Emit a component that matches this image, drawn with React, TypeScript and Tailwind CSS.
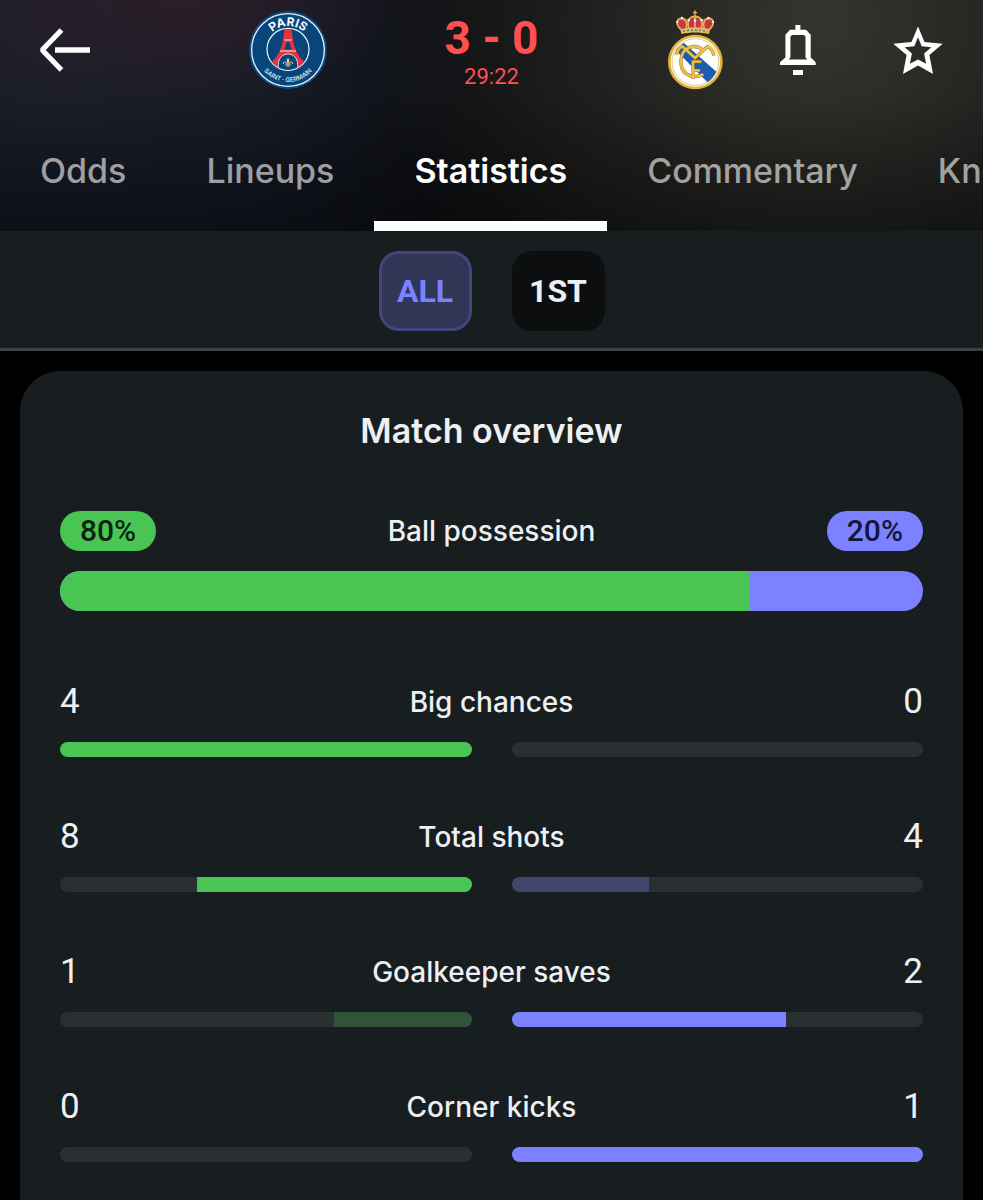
import { clsx } from 'clsx';

interface Stat {
    label: string;
    home: number;
    away: number;
}

const TABS = ['Odds', 'Lineups', 'Statistics', 'Commentary', 'Knockout'];

const STATS: Stat[] = [
    { label: 'Big chances', home: 4, away: 0 },
    { label: 'Total shots', home: 8, away: 4 },
    { label: 'Goalkeeper saves', home: 1, away: 2 },
    { label: 'Corner kicks', home: 0, away: 1 },
];

function BackIcon() {
    return (
        <svg viewBox="0 0 51 48" className="h-12 w-[51px]" fill="none" stroke="currentColor">
            <path d="M21.5 4 2.2 24 21.5 44" strokeWidth="5.2" strokeLinejoin="bevel" />
            <path d="M15 24h35" strokeWidth="5.5" />
        </svg>
    );
}

function BellIcon() {
    return (
        <svg viewBox="0 0 48 52" className="h-[52px] w-12" fill="currentColor">
            <path d="M21.4 1h5v5h-5z" />
            <path
                fillRule="evenodd"
                d="M16 5.7h16l4.7 5v22.800l5 4.800V41H6v-2.700l5.400-4.800V10.700ZM18 11l-1.600 1.700v20.800L14.600 35.500h18.800l-1.900-2V12.700L30 11Z"
            />
            <path d="M19 46h10v5H19z" />
        </svg>
    );
}

function StarIcon() {
    return (
        <svg viewBox="0 0 50 48" className="h-12 w-[50px]" fill="currentColor">
            <path
                fillRule="evenodd"
                d="m25 .5 6.500 15.500 18.200 1.700-13.300 11.300 3.600 18.900L25 39.500 10 47.900l3.600-18.900L.3 17.700l18.200-1.700ZM25 11.200l-3.700 9-9.600 1 7.200 6.300-2 10.200 8.100-4.200 8.100 4.200-2-10.200 7.200-6.300-9.600-1Z"
            />
        </svg>
    );
}

function ParisCrest() {
    return (
        <svg viewBox="30 30 240 240" className="size-20" role="img" aria-label="Paris Saint-Germain">
            <defs>
                <path id="psg-top" d="M78 150a72 72 0 0 1 144 0" />
                <path id="psg-bottom" d="M54 150a96 96 0 0 0 192 0" />
                <clipPath id="psg-inner">
                    <circle cx="150" cy="148" r="61" />
                </clipPath>
            </defs>
            <circle cx="150" cy="150" r="117" fill="#0b4a82" />
            <circle cx="150" cy="150" r="109" fill="#07457b" stroke="#e6f0f6" strokeWidth="4" />
            <circle cx="150" cy="148" r="63" fill="#07457b" stroke="#f3f8fb" strokeWidth="3.5" />
            <g clipPath="url(#psg-inner)">
                <path d="M140 84h20l5 36c6 32 18 54 42 74l-18 22h-78l-18-22c24-20 36-42 42-74Z" fill="#e9323c" />
                <path d="M139 120h22M126 153h48" stroke="#f6e9ed" strokeWidth="3" />
                <path d="M146 126h8l7 23h-22Z" fill="#07457b" />
                <path d="M121 212v-18c0-20 13-32 29-32s29 12 29 32v18Z" fill="#07457b" stroke="#f3f8fb" strokeWidth="2.5" />
                <path d="M150 174c-6 7-5 11-2 17h4c3-6 4-10-2-17Z" fill="#dfc596" />
                <path d="M146 193c-3-10-12-9-9-1M154 193c3-10 12-9 9-1M141 195h18M150 190v12" fill="none" stroke="#dfc596" strokeWidth="3" />
            </g>
            <text className="font-['Inter']" fontSize="36" fontWeight="700" fill="#f8fbfd">
                <textPath href="#psg-top" startOffset="50%" textAnchor="middle">PARIS</textPath>
            </text>
            <text className="font-['Inter']" fontSize="19" fontWeight="600" fill="#d3e3ee">
                <textPath href="#psg-bottom" startOffset="50%" textAnchor="middle">SAINT · GERMAIN</textPath>
            </text>
        </svg>
    );
}

function MadridCrest() {
    return (
        <svg viewBox="0 30 240 240" className="size-20" role="img" aria-label="Real Madrid">
            <defs>
                <clipPath id="rm-inner">
                    <circle cx="121" cy="188" r="70" />
                </clipPath>
            </defs>

            {/* crown */}
            <path d="M77 91c-16-14-16-29-3-36 11-4 20-1 25 6 4-9 13-14 21-14s17 5 21 14c5-7 14-10 25-6 13 7 13 22-3 36-30-7-56-7-86 0Z" fill="#c9364b" />
            <g fill="none" stroke="#dfb74f" strokeWidth="5">
                <path d="M78 89C59 70 66 55 80 55c16 2 18 18 13 32M163 89c19-19 12-34-2-34-16 2-18 18-13 32" />
                <path d="M102 86c-8-23 2-37 18-37s26 14 18 37M120 48v36" />
            </g>
            <g fill="#f7efcf">
                <circle cx="67" cy="66" r="3.5" />
                <circle cx="81" cy="54" r="4" />
                <circle cx="101" cy="60" r="4" />
                <circle cx="120" cy="62" r="4" />
                <circle cx="140" cy="60" r="4" />
                <circle cx="160" cy="54" r="4" />
                <circle cx="174" cy="66" r="3.5" />
            </g>
            <path d="M120 31v17M114 38h12" stroke="#dfb74f" strokeWidth="4" />
            <path d="M76 88c29-8 61-8 89 0l-3 14c-28-6-54-6-83 0Z" fill="#e4bd55" />
            <path d="M84 94c25-5 49-5 73 0" stroke="#4d7198" strokeWidth="4" strokeDasharray="6 6" fill="none" />

            {/* roundel */}
            <circle cx="121" cy="186" r="78" fill="#fff" stroke="#dfb13d" strokeWidth="8" />
            <g clipPath="url(#rm-inner)">
                <path d="m62 151 24-23 99 88-23 35Z" fill="#1d5bb0" />
            </g>
            <circle cx="121" cy="186" r="70" fill="none" stroke="#d9aa35" strokeWidth="2" />
            <g fill="none" strokeLinejoin="round">
                <g stroke="#9d7826" strokeWidth="10">
                    <path d="M64 164c4-15 11-22 18-25l38 35 38-35c10 6 16 14 19 28M145 151c-24-22-63-11-67 27-4 40 28 64 67 45" />
                    <path d="M139 185h-25v52M114 211h21" />
                </g>
                <g stroke="#ecc24c" strokeWidth="7">
                    <path d="M64 164c4-15 11-22 18-25l38 35 38-35c10 6 16 14 19 28M145 151c-24-22-63-11-67 27-4 40 28 64 67 45" />
                    <path d="M139 185h-25v52M114 211h21" />
                </g>
            </g>
        </svg>
    );
}

function MatchHeader() {
    return (
        <header className="overflow-hidden bg-[linear-gradient(to_bottom,transparent_40%,rgba(0,0,0,0.35)),radial-gradient(ellipse_220px_100px_at_180px_0px,#2b1e28,transparent),radial-gradient(ellipse_440px_440px_at_820px_20px,#35352f,transparent),radial-gradient(ellipse_420px_260px_at_60px_20px,#20202b,transparent),linear-gradient(to_right,#111622_25%,#0c0d0f_50%)]">
            <div className="grid grid-cols-[3fr_7fr_3fr] items-center px-10 pt-[10px] pb-5 text-white">
                <a href="#back" aria-label="Back" className="w-fit">
                    <BackIcon />
                </a>
                <div className="flex items-center justify-between">
                    <ParisCrest />
                    <div className="flex flex-col items-center font-['Roboto',sans-serif] text-[#ff4f50]">
                        <p className="text-[46px] leading-[54px] font-bold whitespace-nowrap">3 - 0</p>
                        <p className="text-[22px] leading-6">29:22</p>
                    </div>
                    <MadridCrest />
                </div>
                <div className="flex items-center justify-end gap-[71px]">
                    <button type="button" aria-label="Notifications">
                        <BellIcon />
                    </button>
                    <button type="button" aria-label="Favourite">
                        <StarIcon />
                    </button>
                </div>
            </div>
            <nav className="flex">
                {TABS.map((tab) => (
                    <a
                        key={tab}
                        href={`#${tab.toLowerCase()}`}
                        className={clsx(
                            'flex h-[121px] shrink-0 items-center border-b-10 px-10 pt-[10px] text-[34px]',
                            tab === 'Statistics'
                                ? 'border-white font-semibold text-white'
                                : 'border-transparent font-medium text-white/60'
                        )}
                    >
                        {tab}
                    </a>
                ))}
            </nav>
        </header>
    );
}

function PeriodFilter() {
    return (
        <div className="flex justify-center gap-10 border-b-3 border-[#3d4144] bg-[#181d1f] pt-5 pb-[17px] font-['Roboto',sans-serif] text-[32px] font-bold">
            <button type="button" aria-pressed="true" className="h-20 min-w-[93px] rounded-[20px] border-3 border-[#42467d] bg-[#303655] text-[#7c82ff]">
                ALL
            </button>
            <button type="button" aria-pressed="false" className="h-20 min-w-[93px] rounded-[20px] bg-[#0c0e10] text-[#edf0f3]">
                1ST
            </button>
        </div>
    );
}

function StatRow({ label, home, away }: Stat) {
    const total = home + away;

    return (
        <div>
            <div className="grid grid-cols-[1fr_auto_1fr] items-center leading-10">
                <span className="font-['Roboto',sans-serif] text-[35px]">{home}</span>
                <span className="text-[28px] font-medium">{label}</span>
                <span className="text-right font-['Roboto',sans-serif] text-[35px]">{away}</span>
            </div>
            <div className="mt-5 grid grid-cols-2 gap-10">
                <div className="flex h-[15px] justify-end overflow-hidden rounded-full bg-[#2a2f32]">
                    <div
                        className={home < away ? 'bg-[#30543a]' : 'bg-[#49c553]'}
                        style={{ width: `${(home / total) * 100}%` }}
                    />
                </div>
                <div className="flex h-[15px] overflow-hidden rounded-full bg-[#2a2f32]">
                    <div
                        className={away < home ? 'bg-[#40456a]' : 'bg-[#7c82ff]'}
                        style={{ width: `${(away / total) * 100}%` }}
                    />
                </div>
            </div>
        </div>
    );
}

function MatchOverview() {
    return (
        <section className="mx-5 mt-5 flex-1 rounded-t-[40px] bg-[#181d1f] px-10 pt-10 pb-9 text-[#edf0f3]">
            <h2 className="text-center text-[34px] leading-10 font-semibold">Match overview</h2>

            <div className="mt-[60px] flex items-center justify-between leading-10">
                <span className="rounded-full bg-[#49c553] px-5 font-['Roboto',sans-serif] text-[30px] font-medium text-[#0b230e]">
                    80%
                </span>
                <span className="text-[28px] font-medium">Ball possession</span>
                <span className="rounded-full bg-[#7c82ff] px-5 font-['Roboto',sans-serif] text-[30px] font-medium text-[#11163c]">
                    20%
                </span>
            </div>
            <div className="mt-5 flex h-10 overflow-hidden rounded-full bg-[#7c82ff]">
                <div className="bg-[#49c553]" style={{ width: '80%' }} />
            </div>

            <div className="mt-[71px] flex flex-col gap-[60px]">
                {STATS.map((stat) => (
                    <StatRow key={stat.label} {...stat} />
                ))}
            </div>
        </section>
    );
}

export default function App() {
    return (
        <div className="flex min-h-screen flex-col bg-black font-['Inter',sans-serif]">
            <MatchHeader />
            <PeriodFilter />
            <MatchOverview />
        </div>
    );
}
